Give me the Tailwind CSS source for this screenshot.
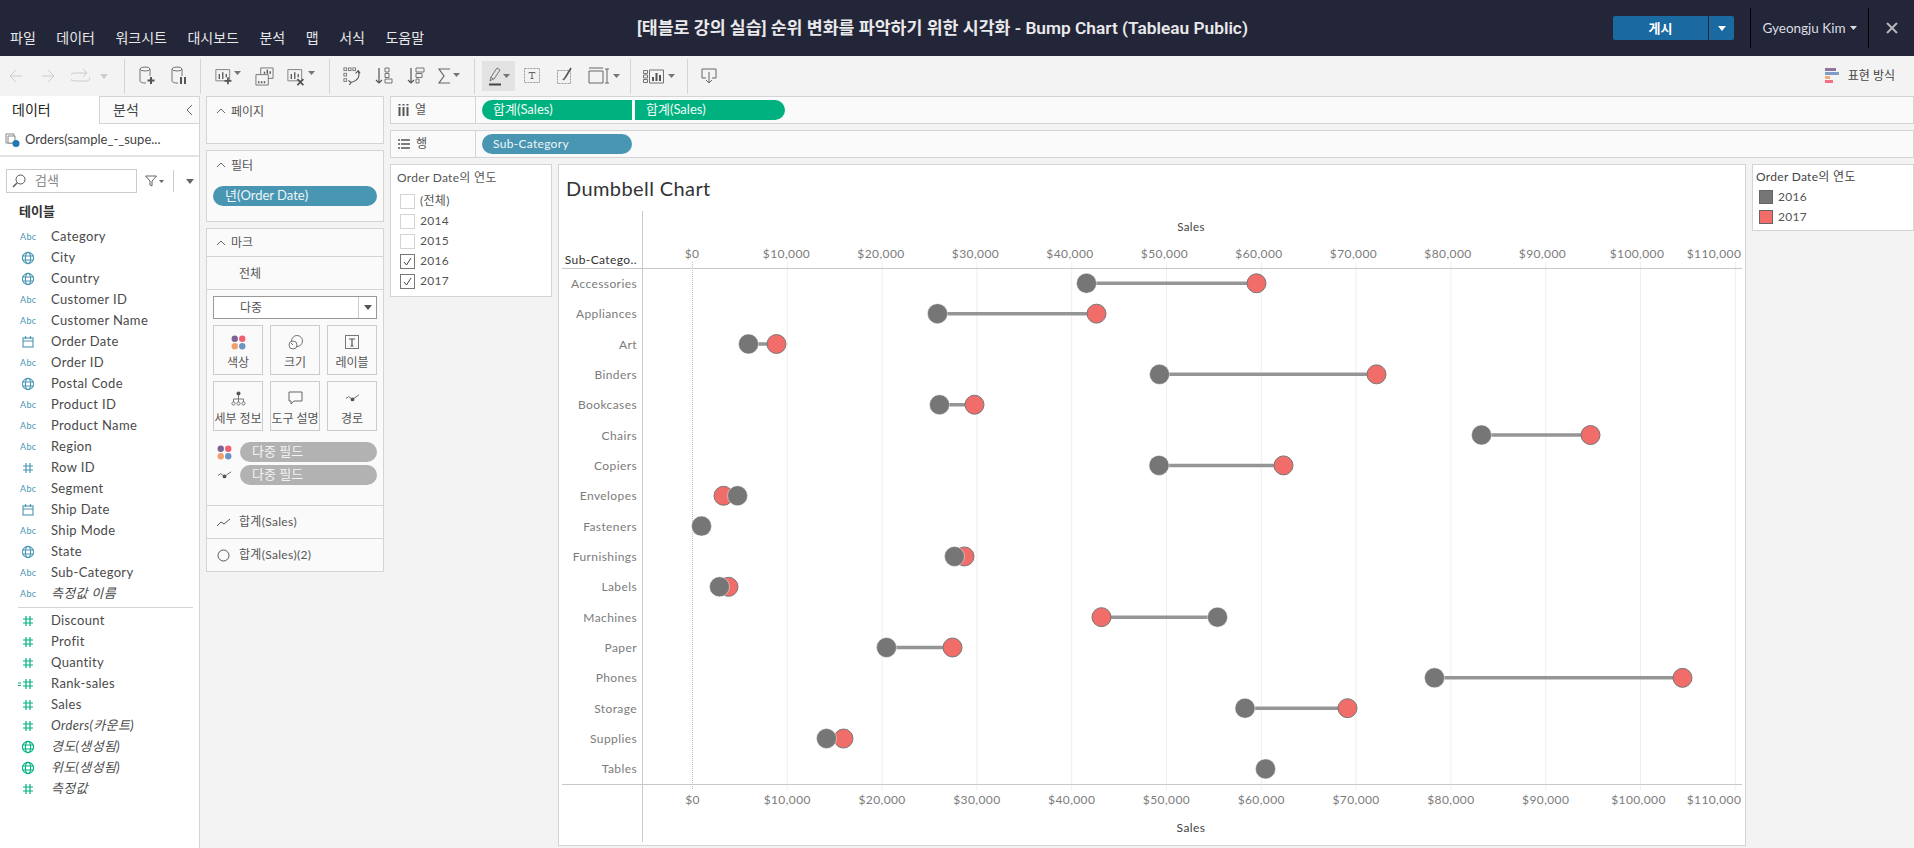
<!DOCTYPE html>
<html lang="ko">
<head>
    <meta charset="UTF-8">
    <title>Bump Chart (Tableau Public)</title>
    <script src="https://cdn.jsdelivr.net/npm/@tailwindcss/browser@4"></script>
</head>
<body class="bg-[#f3f3f3] font-['Lato','Noto_Sans_CJK_KR',sans-serif] text-[13px] text-[#555] overflow-hidden">
    <!-- icon sprite -->
    <svg class="hidden">
        <symbol id="globe" viewBox="0 0 14 14"><g fill="none" stroke="currentColor" stroke-width="1.1"><circle cx="7" cy="7" r="5.6"/><ellipse cx="7" cy="7" rx="2.6" ry="5.6"/><path d="M1.4 5h11.2M1.4 9h11.2"/></g></symbol>
        <symbol id="cal" viewBox="0 0 14 14"><g fill="none" stroke="currentColor" stroke-width="1.1"><rect x="2" y="3" width="10" height="9"/><path d="M2 6h10M4.500 1v3M9.500 1v3"/></g></symbol>
        <symbol id="hash" viewBox="0 0 14 14"><path d="M5 2v10M9 2v10M2 5h10M2 9h10" fill="none" stroke="currentColor" stroke-width="1.2"/></symbol>
        <symbol id="up" viewBox="0 0 10 6"><path d="M1 5l4-4 4 4" fill="none" stroke="#666" stroke-width="1"/></symbol>
        <symbol id="dots" viewBox="0 0 16 16"><circle cx="4" cy="4" r="3.400" fill="#7b6393"/><circle cx="12" cy="4" r="3.400" fill="#f0606f"/><circle cx="4" cy="12" r="3.400" fill="#f2a06a"/><circle cx="12" cy="12" r="3.400" fill="#6a93c6"/></symbol>
        <symbol id="path" viewBox="0 0 16 12"><path d="M1 6l3-2 4 3 7-5" fill="none" stroke="#666" stroke-width="1"/><circle cx="8" cy="7" r="2" fill="#555"/></symbol>
        <symbol id="caret" viewBox="0 0 7 4"><path d="M0 0h7L3.500 4z" fill="#757575"/></symbol>
    </svg>

    <div class="w-[1914px] h-[848px] flex flex-col">
        <!-- title bar -->
        <header class="h-[56px] bg-[#232638] text-[#e8e8e8] flex relative shrink-0">
            <nav class="flex gap-[20.500px] pl-[10px] pt-[29px] text-[14px] leading-[18px]">
                <span>파일</span><span>데이터</span><span>워크시트</span><span>대시보드</span><span>분석</span><span>맵</span><span>서식</span><span>도움말</span>
            </nav>
            <h1 class="absolute left-[637px] top-[17px] w-[611px] text-center text-[17.300px] leading-[22px] font-semibold text-[#e9e9ec] whitespace-nowrap font-['Roboto','Noto_Sans_CJK_KR',sans-serif]">[태블로 강의 실습] 순위 변화를 파악하기 위한 시각화 - Bump Chart (Tableau Public)</h1>
            <div class="ml-auto flex items-center">
                <div class="flex h-[24px] w-[121px] bg-[#1a69a1] rounded-[2px] text-white font-bold text-[13px]">
                    <span class="w-[96px] text-center leading-[24px] border-r border-[#232638]">게시</span>
                    <span class="flex-1 flex items-center justify-center"><svg class="w-[8px] h-[5px]"><path d="M0 0h8L4 5z" fill="#fff"/></svg></span>
                </div>
                <div class="ml-[16px] w-px h-[40px] bg-black"></div>
                <div class="w-[117px] flex items-center justify-center gap-[4px] text-[13.500px] text-[#dcdde2]">Gyeongju Kim<svg class="w-[7px] h-[4px]"><path d="M0 0h7L3.500 4z" fill="#dcdde2"/></svg></div>
                <div class="w-px h-[40px] bg-black"></div>
                <div class="w-[45px] flex justify-center"><svg class="w-[12px] h-[12px]" viewBox="0 0 12 12"><path d="M1 1l10 10M11 1L1 11" stroke="#b5b5ba" stroke-width="2"/></svg></div>
            </div>
        </header>

        <!-- toolbar -->
        <div class="h-[40px] shrink-0 flex items-center bg-[#f3f3f3]">
            <div class="flex items-center h-[35px]">
                <div class="w-[31px] flex justify-center"><svg class="w-[14px] h-[14px]" viewBox="0 0 14 14"><path d="M13 7H1M7 1L1 7l6 6" fill="none" stroke="#ccc"/></svg></div>
                <div class="w-[33px] flex justify-center"><svg class="w-[14px] h-[14px]" viewBox="0 0 14 14"><path d="M1 7h12M7 1l6 6-6 6" fill="none" stroke="#ccc"/></svg></div>
                <div class="w-[32px] flex justify-center"><svg class="w-[19px] h-[14px]" viewBox="0 0 19 14"><path d="M15 4H3a2.500 2.500 0 0 0 0 8h13a2.500 2.500 0 0 0 2-4" fill="none" stroke="#ccc"/><path d="M12 0l4 4-4 4" fill="none" stroke="#ccc"/></svg></div>
                <div class="w-[16px] flex justify-center"><svg class="w-[8px] h-[5px]" viewBox="0 0 8 5"><path d="M0 0h8L4 5z" fill="#ccc"/></svg></div>
                <div class="w-[12px]"></div>
                <div class="w-px h-[35px] bg-[#d4d4d4]"></div>
                <div class="w-[40px] ml-[2px] flex justify-center"><svg class="w-[16px] h-[20px]" viewBox="0 0 16 20"><g fill="none" stroke="#757575"><ellipse cx="6" cy="3" rx="5" ry="2"/><path d="M1 3v12a5 2 0 0 0 6 2M11 3v7"/></g><path d="M12 11v7M8.500 14.500h7" stroke="#555" stroke-width="2"/></svg></div>
                <div class="w-[24px] flex justify-center"><svg class="w-[16px] h-[20px]" viewBox="0 0 16 20"><g fill="none" stroke="#757575"><ellipse cx="6" cy="3" rx="5" ry="2"/><path d="M1 3v12a5 2 0 0 0 6 2M11 3v7"/></g><path d="M10 11v7M14 11v7" stroke="#555" stroke-width="2"/></svg></div>
                <div class="w-[9px]"></div>
                <div class="w-px h-[35px] bg-[#d4d4d4]"></div>
                <div class="w-[44px] pl-[14px] flex items-center"><svg class="w-[19px] h-[19px] shrink-0" viewBox="0 0 22 22"><path d="M1 3h16v13H1z" fill="none" stroke="#757575"/><path d="M5 8v6M9 6v8M13 8v4" stroke="#555" stroke-width="1.500"/><path d="M15 12v8M11 16h8" stroke="#555" stroke-width="2"/></svg><svg class="w-[7px] h-[4px] shrink-0 mb-[6px]"><use href="#caret"/></svg></div>
                <div class="w-[38px] flex justify-center"><svg class="w-[19px] h-[19px]" viewBox="0 0 20 20"><path d="M6 1h13v11H6z" fill="none" stroke="#757575"/><path d="M1 8h13v11H1z" fill="#f3f3f3" stroke="#757575"/><path d="M10 7V5M13 7V3M16 7V4.500M4 17v-2M7 17v-2M10 17v-2" stroke="#555" stroke-width="1.500"/></svg></div>
                <div class="w-[40px] pl-[4px] flex items-center gap-[2px]"><svg class="w-[19px] h-[19px] shrink-0" viewBox="0 0 22 22"><path d="M1 3h16v13H1z" fill="none" stroke="#757575"/><path d="M5 8v6M9 6v8M13 8v4" stroke="#555" stroke-width="1.500"/><path d="M12 14l7 7M19 14l-7 7" stroke="#555" stroke-width="2"/></svg><svg class="w-[7px] h-[4px] shrink-0 mb-[6px]"><use href="#caret"/></svg></div>
                <div class="w-[6px]"></div>
                <div class="w-px h-[35px] bg-[#d4d4d4]"></div>
                <div class="w-[32px] ml-[6px] flex justify-center"><svg class="w-[18px] h-[18px]" viewBox="0 0 20 20"><g fill="none" stroke="#757575"><rect x="1" y="1" width="3" height="3"/><rect x="6" y="1" width="3" height="3"/><rect x="11" y="1" width="3" height="3"/><rect x="1" y="7" width="3" height="3"/><rect x="1" y="13" width="3" height="3"/></g><path d="M17 5c2 5 0 10-8 12M6 15l3 2-2 3M14 7l3-3 2 3" fill="none" stroke="#555" stroke-width="1.200"/></svg></div>
                <div class="w-[32px] flex justify-center"><svg class="w-[18px] h-[18px]" viewBox="0 0 18 18"><path d="M4 1v15M1 13l3 3 3-3" fill="none" stroke="#555" stroke-width="1.200"/><path d="M10 1h4v4h-4zM10 6.500h4v4h-4zM10 12h7v4h-7z" fill="none" stroke="#757575"/></svg></div>
                <div class="w-[32px] flex justify-center"><svg class="w-[18px] h-[18px]" viewBox="0 0 18 18"><path d="M4 1v15M1 13l3 3 3-3" fill="none" stroke="#555" stroke-width="1.200"/><path d="M9 1h8v4H9zM9 6.500h6v4H9zM9 12h3v4H9z" fill="none" stroke="#757575"/></svg></div>
                <div class="w-[34px] flex justify-center gap-[2px]"><svg class="w-[13px] h-[16px]" viewBox="0 0 13 16"><path d="M12 1H1l5 7-5 7h11" fill="none" stroke="#666" stroke-width="1.200"/></svg><svg class="w-[7px] h-[4px] mt-[5px]"><use href="#caret"/></svg></div>
                <div class="w-[8px]"></div>
                <div class="w-px h-[35px] bg-[#d4d4d4]"></div>
                <div class="w-[33px] h-[30px] ml-[7px] bg-[#e3e3e3] flex items-center justify-center gap-[1px]"><svg class="w-[14px] h-[19px]" viewBox="0 0 14 19"><path d="M5 12l-2-2 6-9 3 2-6 9zM3 10l-1 4 3-2" fill="none" stroke="#757575"/><path d="M1 17.500h12" stroke="#444" stroke-width="2"/></svg><svg class="w-[7px] h-[4px]"><use href="#caret"/></svg></div>
                <div class="w-[33px] flex justify-center"><svg class="w-[16px] h-[16px]" viewBox="0 0 16 16"><rect x=".5" y=".5" width="15" height="14" fill="none" stroke="#999" stroke-dasharray="2 1"/><path d="M5 4.500h6M8 4.500v6M6.500 10.500h3M5 4.500v1M11 4.500v1" stroke="#666" fill="none"/></svg></div>
                <div class="w-[34px] flex justify-center"><svg class="w-[16px] h-[18px]" viewBox="0 0 16 18"><rect x=".5" y="3.500" width="13" height="13" fill="none" stroke="#999" stroke-dasharray="2 1"/><path d="M14 1L8 11M6 13l2-2" stroke="#555" stroke-width="1.600" fill="none"/></svg></div>
                <div class="w-[44px] flex justify-center gap-[3px]"><svg class="w-[22px] h-[18px]" viewBox="0 0 22 18"><path d="M1 4h14v12H1zM1 1h14M19 2v14M17 2h4M17 16h4" fill="none" stroke="#666"/></svg><svg class="w-[7px] h-[4px] mt-[7px]"><use href="#caret"/></svg></div>
                <div class="w-[4px]"></div>
                <div class="w-px h-[35px] bg-[#d4d4d4]"></div>
                <div class="w-[56px] pl-[12px] flex items-center gap-[4px]"><svg class="w-[21px] h-[15px] shrink-0" viewBox="0 0 21 15"><path d="M.5 1.500h4v3h-4zM.5 6h4v3h-4zM.5 10.500h4v3h-4zM6.500 1h14v13h-14z" fill="none" stroke="#757575"/><path d="M10 12V8M13.500 12V4M17 12V6" stroke="#555" stroke-width="2"/></svg><svg class="w-[7px] h-[4px] shrink-0"><use href="#caret"/></svg></div>
                <div class="w-px h-[35px] bg-[#d4d4d4]"></div>
                <div class="w-[42px] flex justify-center"><svg class="w-[16px] h-[16px]" viewBox="0 0 16 16"><path d="M5 10H1V1h14v9h-4M8 4v11M5 12l3 3 3-3" fill="none" stroke="#666"/></svg></div>
            </div>
            <div class="ml-auto mr-[19px] flex items-center gap-[9px] text-[12px] text-[#444]">
                <svg class="w-[14px] h-[16px]" viewBox="0 0 14 16"><rect width="11" height="3" fill="#8d76a0"/><rect y="4" width="14" height="3" fill="#7f9cc6"/><rect y="8" width="5" height="3" fill="#f2a878"/><rect y="12" width="8" height="3" fill="#f2707f"/></svg>
                <span>표현 방식</span>
            </div>
        </div>

        <main class="flex-1 flex min-h-0">
            <!-- data pane -->
            <aside class="w-[200px] shrink-0 bg-white border-r border-[#d4d4d4] flex flex-col">
                <div class="h-[28px] flex text-[14px] leading-[28px]">
                    <div class="w-[100px] pl-[12px] text-[#222] border-r border-[#d4d4d4]">데이터</div>
                    <div class="flex-1 flex justify-between pl-[13px] pr-[6px] bg-[#fafafa] border-b border-t border-[#d4d4d4] text-[#444] leading-[26px]"><span>분석</span><svg class="w-[7px] h-[10px] mt-[8px]" viewBox="0 0 7 10"><path d="M6 0L1 5l5 5" fill="none" stroke="#666"/></svg></div>
                </div>
                <div class="h-[33px] flex items-center pl-[5px] gap-[5px] border-b-2 border-[#e3e3e3] text-[13px] text-[#444]">
                    <svg class="w-[15px] h-[15px]" viewBox="0 0 15 15"><path d="M1 2h8v9H1z" fill="none" stroke="#888"/><path d="M3 4h7v7H3z" fill="#fff" stroke="#888"/><circle cx="11" cy="11.500" r="3.500" fill="#1f77b4"/></svg>
                    <span>Orders(sample_-_supe...</span>
                </div>
                <div class="flex items-center h-[24px] mt-[12px] pl-[6px]">
                    <div class="w-[131px] h-[24px] border border-[#ccc] flex items-center pl-[5px] gap-[9px] text-[13px] text-[#888]">
                        <svg class="w-[14px] h-[14px]" viewBox="0 0 14 14"><circle cx="8.500" cy="5.500" r="4.500" fill="none" stroke="#555"/><path d="M5 9l-4 4" stroke="#555" stroke-width="1.400"/></svg>
                        <span>검색</span>
                    </div>
                    <svg class="w-[12px] h-[12px] ml-[8px]" viewBox="0 0 12 12"><path d="M.5 1h11L7 6v5L5 10V6z" fill="none" stroke="#666"/></svg>
                    <svg class="w-[5px] h-[3px] ml-[2px]"><path d="M0 0h5L2.500 3z" fill="#666"/></svg>
                    <div class="w-px h-[22px] bg-[#ccc] ml-[9px]"></div>
                    <svg class="w-[8px] h-[5px] ml-[12px]"><path d="M0 0h8L4 5z" fill="#666"/></svg>
                </div>
                <div class="mt-[8px] pl-[19px] leading-[20px] font-semibold text-[#333] text-[13px]">테이블</div>
                <!-- fields -->
                <ul class="mt-[5px] text-[13px] leading-[21px] text-[#4a4a4a] tracking-[0.35px]">
                    <li class="flex h-[21px] items-center"><span class="w-[51px] pl-[20px] text-[9px] text-[#4996b2]">Abc</span>Category</li>
                    <li class="flex h-[21px] items-center"><span class="w-[51px] pl-[21px] text-[#4996b2]"><svg class="w-[14px] h-[14px]"><use href="#globe"/></svg></span>City</li>
                    <li class="flex h-[21px] items-center"><span class="w-[51px] pl-[21px] text-[#4996b2]"><svg class="w-[14px] h-[14px]"><use href="#globe"/></svg></span>Country</li>
                    <li class="flex h-[21px] items-center"><span class="w-[51px] pl-[20px] text-[9px] text-[#4996b2]">Abc</span>Customer ID</li>
                    <li class="flex h-[21px] items-center"><span class="w-[51px] pl-[20px] text-[9px] text-[#4996b2]">Abc</span>Customer Name</li>
                    <li class="flex h-[21px] items-center"><span class="w-[51px] pl-[21px] text-[#4996b2]"><svg class="w-[14px] h-[14px]"><use href="#cal"/></svg></span>Order Date</li>
                    <li class="flex h-[21px] items-center"><span class="w-[51px] pl-[20px] text-[9px] text-[#4996b2]">Abc</span>Order ID</li>
                    <li class="flex h-[21px] items-center"><span class="w-[51px] pl-[21px] text-[#4996b2]"><svg class="w-[14px] h-[14px]"><use href="#globe"/></svg></span>Postal Code</li>
                    <li class="flex h-[21px] items-center"><span class="w-[51px] pl-[20px] text-[9px] text-[#4996b2]">Abc</span>Product ID</li>
                    <li class="flex h-[21px] items-center"><span class="w-[51px] pl-[20px] text-[9px] text-[#4996b2]">Abc</span>Product Name</li>
                    <li class="flex h-[21px] items-center"><span class="w-[51px] pl-[20px] text-[9px] text-[#4996b2]">Abc</span>Region</li>
                    <li class="flex h-[21px] items-center"><span class="w-[51px] pl-[21px] text-[#4996b2]"><svg class="w-[14px] h-[14px]"><use href="#hash"/></svg></span>Row ID</li>
                    <li class="flex h-[21px] items-center"><span class="w-[51px] pl-[20px] text-[9px] text-[#4996b2]">Abc</span>Segment</li>
                    <li class="flex h-[21px] items-center"><span class="w-[51px] pl-[21px] text-[#4996b2]"><svg class="w-[14px] h-[14px]"><use href="#cal"/></svg></span>Ship Date</li>
                    <li class="flex h-[21px] items-center"><span class="w-[51px] pl-[20px] text-[9px] text-[#4996b2]">Abc</span>Ship Mode</li>
                    <li class="flex h-[21px] items-center"><span class="w-[51px] pl-[21px] text-[#4996b2]"><svg class="w-[14px] h-[14px]"><use href="#globe"/></svg></span>State</li>
                    <li class="flex h-[21px] items-center"><span class="w-[51px] pl-[20px] text-[9px] text-[#4996b2]">Abc</span>Sub-Category</li>
                    <li class="flex h-[21px] items-center"><span class="w-[51px] pl-[20px] text-[9px] text-[#4996b2]">Abc</span><i>측정값 이름</i></li>
                </ul>
                <div class="h-px bg-[#d4d4d4] ml-[18px] mr-[6px] mt-[3px] mb-[2px]"></div>
                <ul class="text-[13px] leading-[21px] text-[#4a4a4a] tracking-[0.35px]">
                    <li class="flex h-[21px] items-center"><span class="w-[51px] pl-[21px] text-[#00b180]"><svg class="w-[14px] h-[14px]"><use href="#hash"/></svg></span>Discount</li>
                    <li class="flex h-[21px] items-center"><span class="w-[51px] pl-[21px] text-[#00b180]"><svg class="w-[14px] h-[14px]"><use href="#hash"/></svg></span>Profit</li>
                    <li class="flex h-[21px] items-center"><span class="w-[51px] pl-[21px] text-[#00b180]"><svg class="w-[14px] h-[14px]"><use href="#hash"/></svg></span>Quantity</li>
                    <li class="flex h-[21px] items-center"><span class="w-[51px] pl-[18px] flex text-[#00b180]"><svg class="w-[3px] h-[14px]" viewBox="0 0 3 14"><path d="M0 6h3M0 8.500h3" stroke="currentColor"/></svg><svg class="w-[14px] h-[14px]"><use href="#hash"/></svg></span>Rank-sales</li>
                    <li class="flex h-[21px] items-center"><span class="w-[51px] pl-[21px] text-[#00b180]"><svg class="w-[14px] h-[14px]"><use href="#hash"/></svg></span>Sales</li>
                    <li class="flex h-[21px] items-center"><span class="w-[51px] pl-[21px] text-[#00b180]"><svg class="w-[14px] h-[14px]"><use href="#hash"/></svg></span><i>Orders(카운트)</i></li>
                    <li class="flex h-[21px] items-center"><span class="w-[51px] pl-[21px] text-[#00b180]"><svg class="w-[14px] h-[14px]"><use href="#globe"/></svg></span><i>경도(생성됨)</i></li>
                    <li class="flex h-[21px] items-center"><span class="w-[51px] pl-[21px] text-[#00b180]"><svg class="w-[14px] h-[14px]"><use href="#globe"/></svg></span><i>위도(생성됨)</i></li>
                    <li class="flex h-[21px] items-center"><span class="w-[51px] pl-[21px] text-[#00b180]"><svg class="w-[14px] h-[14px]"><use href="#hash"/></svg></span><i>측정값</i></li>
                </ul>
            </aside>

            <!-- pages, filters, marks -->
            <section class="w-[178px] ml-[6px] shrink-0 flex flex-col gap-[6px] text-[12px]">
                <div class="h-[48px] bg-[#fafafa] border border-[#d4d4d4] px-[9px] pt-[6px] flex items-start gap-[5px] leading-[18px]">
                    <svg class="w-[10px] h-[6px] mt-[5px]"><use href="#up"/></svg><span>페이지</span>
                </div>
                <div class="h-[72px] bg-[#fafafa] border border-[#d4d4d4]">
                    <div class="px-[9px] pt-[6px] flex items-start gap-[5px] leading-[18px]"><svg class="w-[10px] h-[6px] mt-[5px]"><use href="#up"/></svg><span>필터</span></div>
                    <div class="mx-[6px] mt-[11px] h-[20px] rounded-full bg-[#4996b2] text-[#eef5f8] pl-[12px] leading-[19px] text-[13px]">년(Order Date)</div>
                </div>
                <div class="h-[344px] bg-[#fafafa] border border-[#d4d4d4] flex flex-col">
                    <div class="h-[28px] shrink-0 px-[9px] flex items-center gap-[5px] border-b border-[#d4d4d4]"><svg class="w-[10px] h-[6px]"><use href="#up"/></svg><span>마크</span></div>
                    <div class="h-[33px] shrink-0 pl-[32px] leading-[33px] border-b border-[#d4d4d4]">전체</div>
                    <div class="flex-1 px-[6px] pt-[6px]">
                        <div class="h-[23px] border border-[#999] bg-white flex">
                            <span class="flex-1 pl-[26px] leading-[21px]">다중</span>
                            <span class="w-[18px] border-l border-[#ccc] flex items-center justify-center"><svg class="w-[8px] h-[5px]"><path d="M0 0h8L4 5z" fill="#555"/></svg></span>
                        </div>
                        <div class="grid grid-cols-3 gap-x-[7px] gap-y-[6px] mt-[6px] text-[12px]">
                            <div class="h-[50px] border border-[#ccc] flex flex-col items-center pt-[9px] gap-[5px] leading-[16px]"><svg class="w-[15px] h-[15px]"><use href="#dots"/></svg>색상</div>
                            <div class="h-[50px] border border-[#ccc] flex flex-col items-center pt-[9px] gap-[5px] leading-[16px]"><svg class="w-[15px] h-[15px]" viewBox="0 0 15 15"><circle cx="9" cy="6" r="5.500" fill="none" stroke="#777"/><circle cx="5" cy="10" r="4" fill="#fafafa" stroke="#777"/><path d="M5 10l-2-2" stroke="#777"/></svg>크기</div>
                            <div class="h-[50px] border border-[#ccc] flex flex-col items-center pt-[9px] gap-[5px] leading-[16px]"><svg class="w-[15px] h-[15px]" viewBox="0 0 15 15"><rect x=".5" y=".5" width="13" height="13" fill="none" stroke="#777"/><path d="M4 4h6M7 4v7M5.500 11h3" stroke="#555" stroke-width="1.200"/></svg>레이블</div>
                            <div class="h-[50px] border border-[#ccc] flex flex-col items-center pt-[9px] gap-[5px] leading-[16px] whitespace-nowrap"><svg class="w-[15px] h-[15px]" viewBox="0 0 15 15"><circle cx="7.500" cy="2.500" r="2" fill="#555"/><path d="M7.500 4v4M2.500 11V8h10v3M7.500 8v3" fill="none" stroke="#777"/><circle cx="2.500" cy="12.500" r="1.600" fill="none" stroke="#777"/><circle cx="7.500" cy="12.500" r="1.600" fill="none" stroke="#777"/><circle cx="12.500" cy="12.500" r="1.600" fill="none" stroke="#777"/></svg>세부 정보</div>
                            <div class="h-[50px] border border-[#ccc] flex flex-col items-center pt-[9px] gap-[5px] leading-[16px] whitespace-nowrap"><svg class="w-[15px] h-[15px]" viewBox="0 0 15 15"><path d="M1 1h13v9H6l-3 3v-3H1z" fill="none" stroke="#666"/></svg>도구 설명</div>
                            <div class="h-[50px] border border-[#ccc] flex flex-col items-center pt-[9px] gap-[5px] leading-[16px]"><svg class="w-[15px] h-[15px]"><use href="#path"/></svg>경로</div>
                        </div>
                        <div class="mt-[11px] flex items-center gap-[8px]">
                            <svg class="w-[15px] h-[15px] ml-[4px]"><use href="#dots"/></svg>
                            <div class="flex-1 h-[20px] rounded-full bg-[#b2b2b2] text-[#f3f3f3] pl-[12px] leading-[19px] text-[13px]">다중 필드</div>
                        </div>
                        <div class="mt-[3px] flex items-center gap-[8px]">
                            <svg class="w-[15px] h-[15px] ml-[4px]"><use href="#path"/></svg>
                            <div class="flex-1 h-[20px] rounded-full bg-[#b2b2b2] text-[#f3f3f3] pl-[12px] leading-[19px] text-[13px]">다중 필드</div>
                        </div>
                    </div>
                    <div class="h-[33px] shrink-0 border-t border-[#d4d4d4] flex items-center pl-[10px] gap-[9px]"><svg class="w-[13px] h-[9px]" viewBox="0 0 13 9"><path d="M0 8l4-4 3 2 6-5" fill="none" stroke="#555"/></svg><span class="tracking-[0.3px]">합계(Sales)</span></div>
                    <div class="h-[33px] shrink-0 border-t border-[#d4d4d4] flex items-center pl-[10px] gap-[9px]"><svg class="w-[13px] h-[13px]" viewBox="0 0 13 13"><circle cx="6.500" cy="6.500" r="5.500" fill="none" stroke="#555"/></svg><span class="tracking-[0.3px]">합계(Sales)(2)</span></div>
                </div>
            </section>

            <section class="w-[1524px] ml-[6px] flex flex-col text-[12px]">
                <!-- shelves -->
                <div class="h-[28px] mb-[6px] bg-[#fafafa] border border-[#d4d4d4] flex items-center">
                    <div class="w-[85px] h-full border-r border-[#d4d4d4] flex items-center pl-[7px] gap-[6px] mr-[6px]"><svg class="w-[11px] h-[12px]" viewBox="0 0 11 12"><path d="M1.500 3v9M5.500 3v9M9.500 3v9M1.500 0v1.500M5.500 0v1.500M9.500 0v1.500" stroke="#555" stroke-width="2"/></svg><span>열</span></div>
                    <div class="w-[150px] h-[20px] rounded-l-full bg-[#00b180] text-[#eefaf6] pl-[11px] leading-[19px] text-[13px]">합계(Sales)</div>
                    <div class="w-[150px] h-[20px] ml-[3px] rounded-r-full bg-[#00b180] text-[#eefaf6] pl-[11px] leading-[19px] text-[13px]">합계(Sales)</div>
                </div>
                <div class="h-[28px] mb-[6px] bg-[#fafafa] border border-[#d4d4d4] flex items-center">
                    <div class="w-[85px] h-full border-r border-[#d4d4d4] flex items-center pl-[7px] gap-[6px] mr-[6px]"><svg class="w-[12px] h-[10px]" viewBox="0 0 12 10"><path d="M0 1h2M3 1h9M0 5h2M3 5h9M0 9h2M3 9h9" stroke="#555" stroke-width="1.500"/></svg><span>행</span></div>
                    <div class="w-[150px] h-[20px] rounded-full bg-[#4996b2] text-[#eef5f8] pl-[11px] leading-[19px] tracking-[0.3px]">Sub-Category</div>
                </div>

                <div class="flex-1 flex gap-[6px] items-start">
                    <!-- quick filter -->
                    <div class="w-[162px] h-[133px] bg-white border border-[#d4d4d4] tracking-[0.3px]">
                        <div class="pl-[6px] pt-[4px] leading-[18px] h-[26px] text-[#555]">Order Date의 연도</div>
                        <div class="pl-[9px] h-[20px] flex items-center gap-[5px]"><span class="w-[15px] h-[15px] border border-[#d4d4d4] bg-white"></span>(전체)</div>
                        <div class="pl-[9px] h-[20px] flex items-center gap-[5px]"><span class="w-[15px] h-[15px] border border-[#d4d4d4] bg-white"></span>2014</div>
                        <div class="pl-[9px] h-[20px] flex items-center gap-[5px]"><span class="w-[15px] h-[15px] border border-[#d4d4d4] bg-white"></span>2015</div>
                        <div class="pl-[9px] h-[20px] flex items-center gap-[5px]"><span class="w-[15px] h-[15px] border border-[#777] flex items-center justify-center"><svg class="w-[9px] h-[9px]" viewBox="0 0 9 9"><path d="M1 5l2.500 3L8 1" fill="none" stroke="#444"/></svg></span>2016</div>
                        <div class="pl-[9px] h-[20px] flex items-center gap-[5px]"><span class="w-[15px] h-[15px] border border-[#777] flex items-center justify-center"><svg class="w-[9px] h-[9px]" viewBox="0 0 9 9"><path d="M1 5l2.500 3L8 1" fill="none" stroke="#444"/></svg></span>2017</div>
                    </div>

                    <!-- chart -->
                    <div class="w-[1188px] h-[682px] bg-white border border-[#d4d4d4] shrink-0 flex flex-col">
                        <div class="h-[46px] pl-[7px] pt-[10px] text-[20px] leading-[26px] text-[#333] tracking-[0.4px]">Dumbbell Chart</div>
                        <svg id="chart" class="block" width="1186" height="634" viewBox="559 211 1186 634"></svg>
                    </div>

                    <!-- color legend -->
                    <div class="w-[162px] h-[67px] bg-white border border-[#d4d4d4] tracking-[0.3px]">
                        <div class="pl-[3px] pt-[3px] h-[22px] leading-[18px] text-[#444]">Order Date의 연도</div>
                        <div class="pl-[6px] h-[20px] flex items-center gap-[5px]"><span class="w-[14px] h-[14px] bg-[#767676] border border-[#666]"></span>2016</div>
                        <div class="pl-[6px] h-[20px] flex items-center gap-[5px]"><span class="w-[14px] h-[14px] bg-[#f16d6a] border border-[#666]"></span>2017</div>
                    </div>
                </div>
            </section>
        </main>
    </div>

    <script>
        // sub-category, 2016 x, 2017 x (page pixels)
        const rows = [
            ['Accessories', 1086, 1256], ['Appliances', 937, 1096], ['Art', 748, 776],
            ['Binders', 1159, 1376], ['Bookcases', 939, 974], ['Chairs', 1481, 1590],
            ['Copiers', 1158.5, 1283], ['Envelopes', 737, 723], ['Fasteners', 701, 701],
            ['Furnishings', 954, 964], ['Labels', 719, 728], ['Machines', 1217, 1101],
            ['Paper', 886, 952], ['Phones', 1434, 1682], ['Storage', 1244.5, 1347],
            ['Supplies', 826, 843], ['Tables', 1265, 1265]
        ];
        const svg = document.getElementById('chart');
        const NS = 'http://www.w3.org/2000/svg';
        const add = (tag, attrs, text) => {
            const el = document.createElementNS(NS, tag);
            for (const k in attrs) el.setAttribute(k, attrs[k]);
            if (text) el.textContent = text;
            svg.appendChild(el);
        };
        const font = { 'font-size': 12, 'letter-spacing': 0.4 };

        // grid and axis labels
        for (let k = 0; k <= 11; k++) {
            const x = 692.5 + k * 94.8;
            add('line', { x1: x, x2: x, y1: 262, y2: 790, stroke: k ? '#efefef' : '#bbb', 'stroke-dasharray': k ? '' : '1 1' });
            const label = '$' + (k * 10000).toLocaleString('en-US');
            const top = k === 11 ? 1714 : 692 + k * 94.5;
            const bottom = k === 11 ? 1714 : x + (k === 10 ? -2 : 0);
            add('text', { x: top, y: 258, 'text-anchor': 'middle', fill: '#7c7c7c', ...font }, label);
            add('text', { x: bottom, y: 804, 'text-anchor': 'middle', fill: '#7c7c7c', ...font }, label);
        }
        add('line', { x1: 562, x2: 1742, y1: 268.5, y2: 268.5, stroke: '#c8c8c8', 'stroke-width': 1 });
        add('line', { x1: 562, x2: 1742, y1: 784.5, y2: 784.5, stroke: '#c8c8c8', 'stroke-width': 1 });
        add('line', { x1: 642.5, x2: 642.5, y1: 211, y2: 842, stroke: '#c8c8c8', 'stroke-width': 1 });
        add('text', { x: 1191, y: 231, 'text-anchor': 'middle', fill: '#444', ...font, 'font-size': 11.5 }, 'Sales');
        add('text', { x: 1191, y: 832, 'text-anchor': 'middle', fill: '#444', ...font }, 'Sales');
        add('text', { x: 637, y: 264, 'text-anchor': 'end', fill: '#333', ...font }, 'Sub-Catego..');

        // dumbbells: line, 2017 dot, then 2016 dot on top
        rows.forEach(([name, a, b], i) => {
            const y = 283.3 + i * 30.35;
            add('text', { x: 637, y: y + 4.5, 'text-anchor': 'end', fill: '#7c7c7c', ...font }, name);
            if (a !== b) {
                add('line', { x1: a + .5, x2: b + .5, y1: y, y2: y, stroke: '#959595', 'stroke-width': 3.5 });
                add('circle', { cx: b + .5, cy: y, r: 9.5, fill: '#f16d6a', stroke: '#777', 'stroke-width': 1 });
            }
            add('circle', { cx: a + .5, cy: y, r: 10, fill: '#767676', stroke: '#f2f2f2', 'stroke-width': 0.5 });
        });
    </script>
</body>
</html>
